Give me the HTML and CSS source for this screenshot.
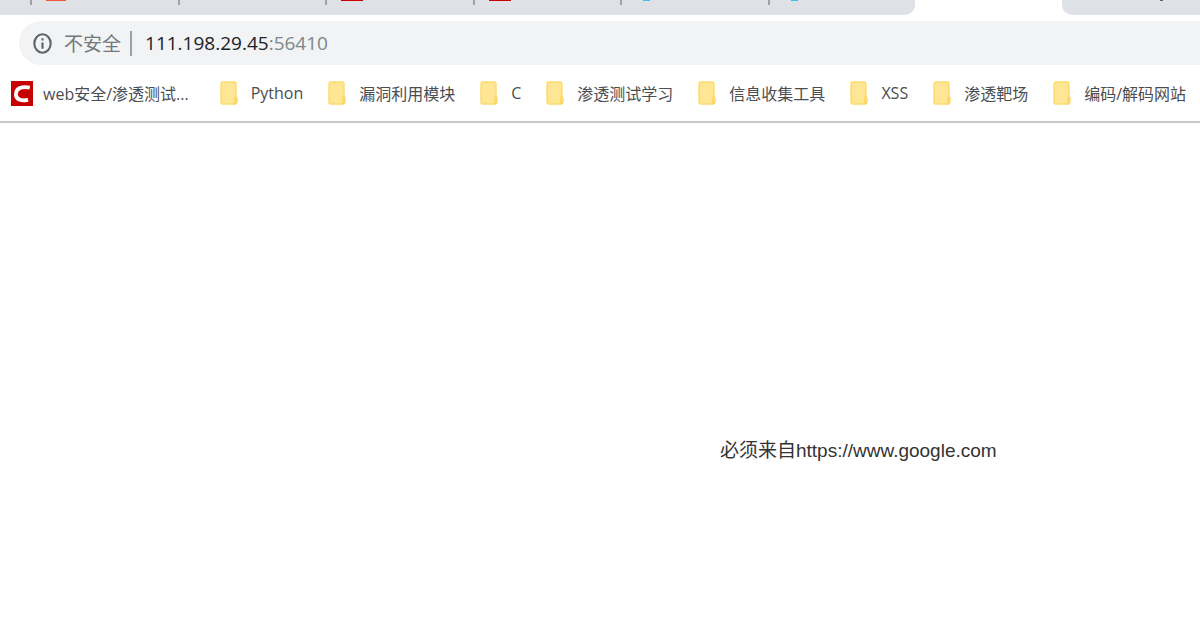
FILE: index.html
```
<!DOCTYPE html>
<html lang="zh-CN">
<head>
    <meta charset="UTF-8">
    <meta name="viewport" content="width=device-width, initial-scale=1.0">
    <title>111.198.29.45:56410</title>
    <link rel="stylesheet" href="styles.css">
</head>
<body>
    <svg width="0" height="0" class="symbols" aria-hidden="true">
        <symbol id="folder" viewBox="0 0 18 24">
            <rect x="1" y="1" width="15" height="22" rx="1.5" fill="#ffe694" stroke="#fbdc6c" stroke-width="1.4"/>
            <path d="M13.5 23q1.2-.4 1.2-2.4V17.5q0-1.8 1.2-1.8t1.2 1.8V21q0 2-2 2z" fill="#ffe07a" stroke="#f5d35c" stroke-width="1"/>
        </symbol>
    </svg>

    <div class="tab-strip">
        <div class="tabs tabs-left">
            <div class="tab"><span class="favicon orange"></span></div>
            <div class="tab"></div>
            <div class="tab"><span class="favicon red"></span></div>
            <div class="tab"><span class="favicon red"></span></div>
            <div class="tab"><span class="favicon blue"></span></div>
            <div class="tab"><span class="favicon blue"></span></div>
        </div>
        <div class="tab-active"></div>
        <div class="tabs tabs-right"><span class="favicon dark"></span></div>
    </div>

    <div class="toolbar">
        <div class="address-bar">
            <svg class="info" viewBox="0 0 18 20" aria-hidden="true">
                <ellipse cx="9" cy="10" rx="7.8" ry="8.8" fill="none" stroke="#5f6368" stroke-width="2"/>
                <path d="M8 9h2v6H8zM8 5h2v2.2H8z" fill="#5f6368"/>
            </svg>
            <span class="insecure">不安全</span>
            <span class="divider"></span>
            <span class="url">111.198.29.45<span class="port">:56410</span></span>
        </div>
    </div>

    <nav class="bookmarks">
        <a href="#" class="bookmark first">
            <svg class="csdn" viewBox="0 0 22 25" aria-hidden="true">
                <rect width="22" height="25" fill="#c80000"/>
                <path d="M18.8 6.6C10.8 5 5 7.3 4.9 13.2c0 5.2 4.9 7.2 12.2 5.7" fill="none" stroke="#fff" stroke-width="3.8"/>
            </svg>
            web安全/渗透测试...
        </a>
        <a href="#" class="bookmark"><svg class="folder"><use href="#folder"/></svg>Python</a>
        <a href="#" class="bookmark"><svg class="folder"><use href="#folder"/></svg>漏洞利用模块</a>
        <a href="#" class="bookmark"><svg class="folder"><use href="#folder"/></svg>C</a>
        <a href="#" class="bookmark"><svg class="folder"><use href="#folder"/></svg>渗透测试学习</a>
        <a href="#" class="bookmark"><svg class="folder"><use href="#folder"/></svg>信息收集工具</a>
        <a href="#" class="bookmark"><svg class="folder"><use href="#folder"/></svg>XSS</a>
        <a href="#" class="bookmark"><svg class="folder"><use href="#folder"/></svg>渗透靶场</a>
        <a href="#" class="bookmark"><svg class="folder"><use href="#folder"/></svg>编码/解码网站</a>
    </nav>

    <main class="page">
        <p class="message">必须来自https://www.google.com</p>
    </main>
</body>
</html>
```
FILE: styles.css
```
body {
    margin: 0;
    background: #fff;
    font-family: "Open Sans", "Noto Sans CJK SC", sans-serif;
    overflow-x: hidden;
}

.symbols {
    position: absolute;
}

/* tabs */
.tab-strip {
    display: grid;
    grid-template-columns: 915fr 147fr 138fr;
    height: 15px;
}

.tabs {
    display: flex;
    background: #dee1e6;
}

.tabs-left {
    padding-left: 30px;
    border-bottom-right-radius: 10px;
}

.tabs-right {
    justify-content: center;
    padding-left: 60px;
    border-bottom-left-radius: 10px;
}

.tab {
    display: flex;
    flex: 1;
}

.tab::before {
    content: "";
    width: 2px;
    height: 5px;
    background: #9fa3a8;
}

.favicon {
    width: 22px;
    height: 1px;
    margin-left: 14px;
}

.orange {
    width: 20px;
    background: #f0563a;
}

.red {
    background: #c80000;
}

.blue {
    width: 7px;
    margin-left: 21px;
    background: #3fc0f0;
}

.dark {
    width: 3px;
    margin-left: 0;
    background: #5f6368;
}

/* address bar */
.toolbar {
    padding: 6px 0 0 19px;
}

.address-bar {
    display: flex;
    align-items: center;
    height: 44px;
    padding-left: 14px;
    background: #f1f3f4;
    border-radius: 22px 0 0 22px;
    font-size: 19px;
}

.info {
    width: 19px;
    height: 21px;
}

.insecure {
    margin-left: 12px;
    color: #74777b;
}

.divider {
    width: 2px;
    height: 25px;
    margin: 0 13px 0 9px;
    background: #9b9fa4;
}

.url {
    color: #202124;
}

.port {
    color: #80868b;
}

/* bookmarks */
.bookmarks {
    display: flex;
    gap: 25px;
    height: 56px;
    padding-left: 11px;
    border-bottom: 2px solid #c8c8c8;
    white-space: nowrap;
}

.bookmark {
    display: flex;
    align-items: center;
    gap: 13px;
    color: #4a4d51;
    font-size: 16px;
    text-decoration: none;
}

.first {
    gap: 10px;
    padding-right: 6px;
}

.csdn {
    width: 22px;
    height: 25px;
}

.folder {
    width: 18px;
    height: 24px;
}

/* page content */
.page {
    padding: 312px 0 0 60%;
}

.message {
    margin: 0;
    color: #333;
    font-family: "Liberation Sans", "Noto Sans CJK SC", sans-serif;
    font-size: 19px;
    line-height: 32px;
}
```
